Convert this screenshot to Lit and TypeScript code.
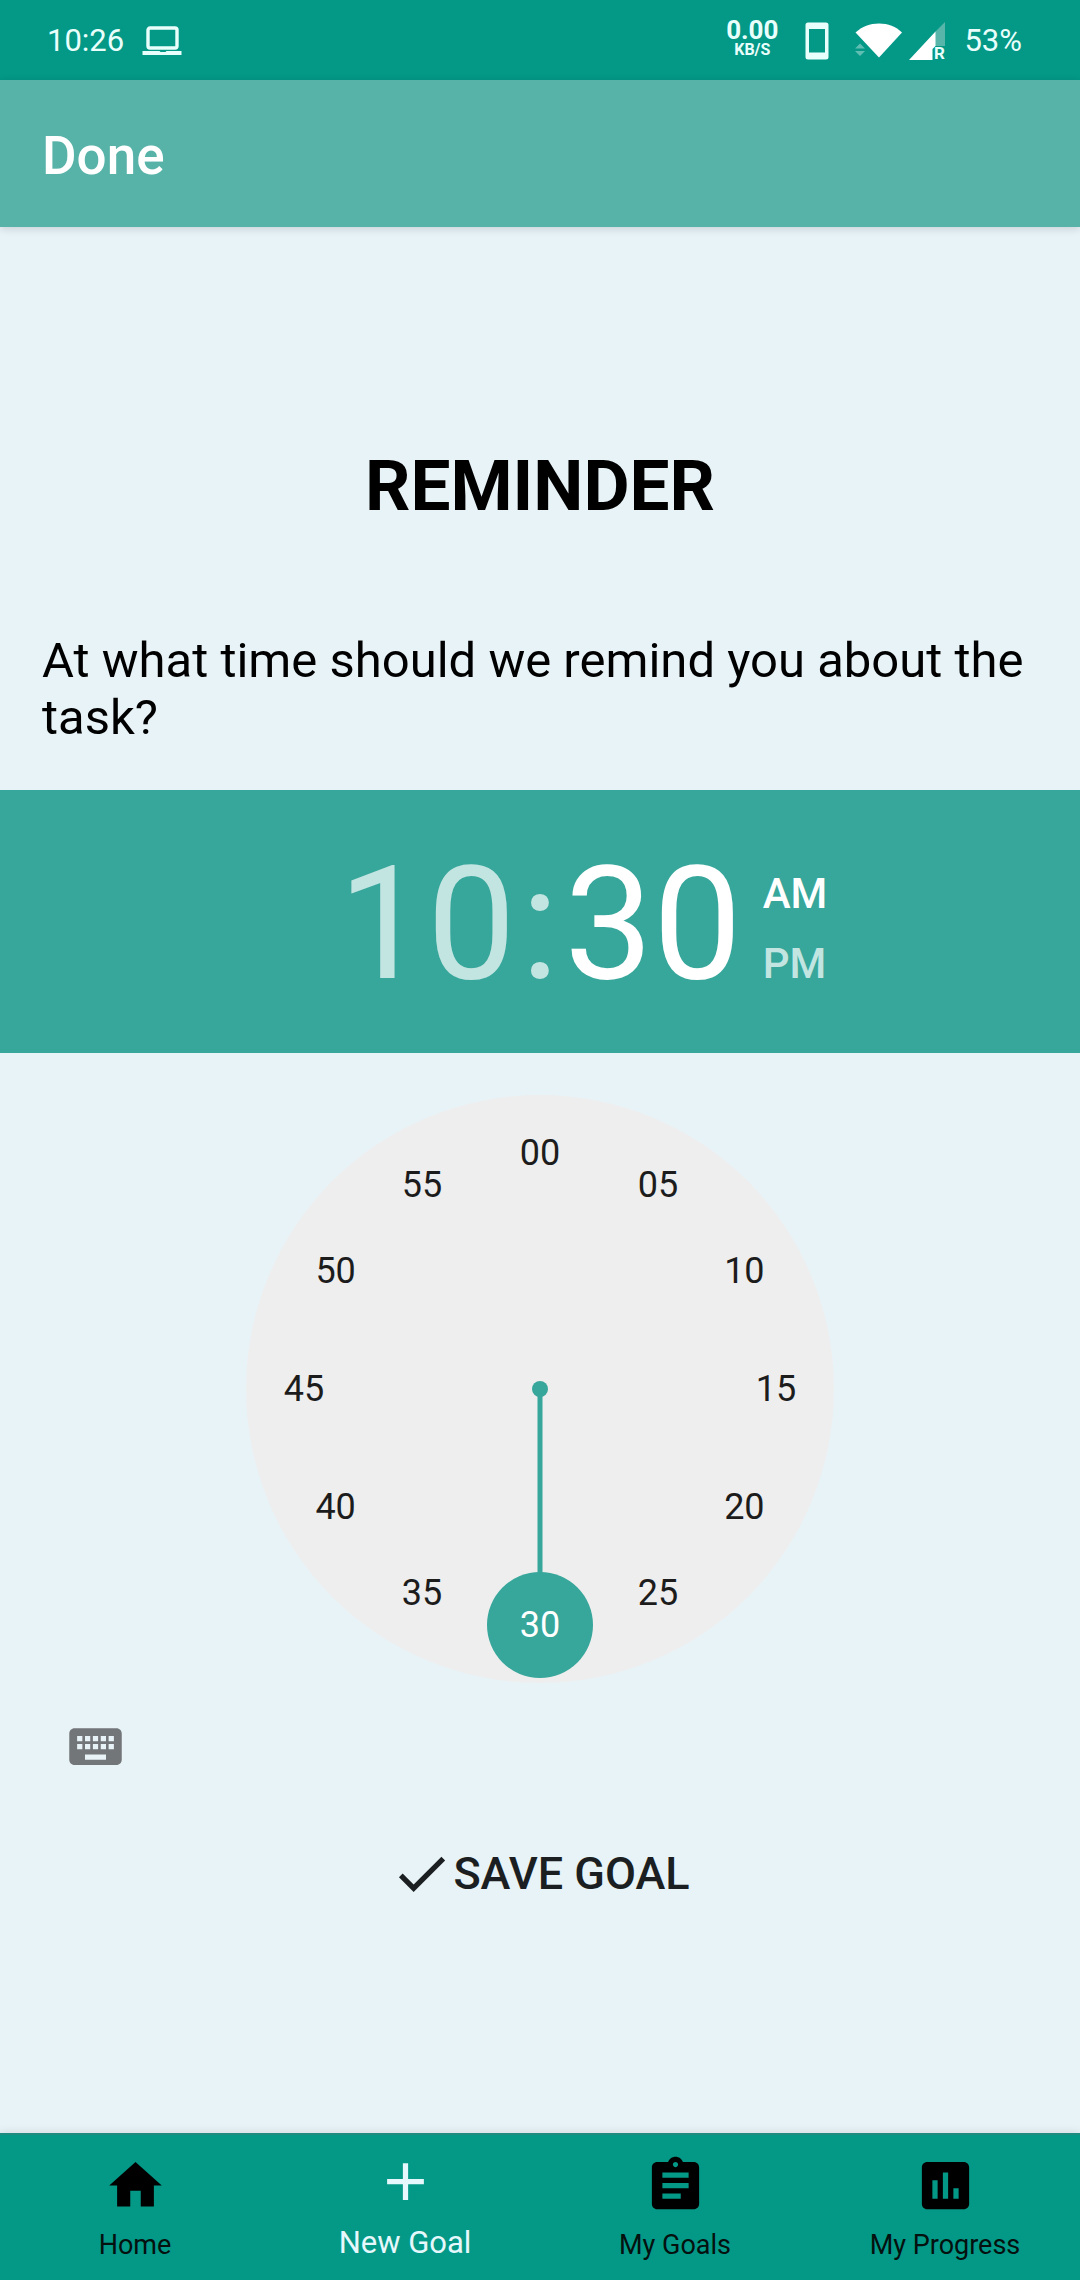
import { LitElement, html, css, svg } from "lit";
import { customElement, state } from "lit/decorators.js";
import { classMap } from "lit/directives/class-map.js";
import { styleMap } from "lit/directives/style-map.js";

const MINUTES = Array.from({ length: 12 }, (_, i) => i * 5);
const FACE = 588;
const RING = 236;

const pad = (n: number) => String(n).padStart(2, "0");

/** Point on the number ring for a minute, in face units. */
function ringPoint(minute: number) {
  const a = (minute / 60) * Math.PI * 2;
  return { x: FACE / 2 + RING * Math.sin(a), y: FACE / 2 - RING * Math.cos(a) };
}

@customElement("status-bar")
class StatusBar extends LitElement {
  static styles = css`
    :host {
      box-sizing: border-box;
      display: flex;
      align-items: center;
      justify-content: space-between;
      min-height: 80px;
      padding: 2px 58px 0 47px;
      background: #049887;
      color: #e9fffb;
      font-size: 31px;
      line-height: 36px;
    }
    .group {
      display: flex;
      align-items: center;
    }
    .left {
      gap: 18px;
    }
    svg {
      display: block;
      overflow: visible;
    }
    .speed {
      display: flex;
      flex-direction: column;
      align-items: center;
      padding-bottom: 4px;
      font-weight: 700;
    }
    .rate {
      font-size: 26px;
      line-height: 22px;
    }
    .unit {
      font-size: 16px;
      line-height: 18px;
    }
    .phone {
      margin-left: 27px;
    }
    .wifi {
      margin-left: 26px;
    }
    .signal {
      margin-left: 7px;
    }
    .battery {
      margin-left: 18px;
    }
    .r {
      font-size: 17px;
      font-weight: 700;
    }
  `;

  render() {
    return html`
      <div class="group left">
        <span>10:26</span>
        <svg width="40" height="30" viewBox="0 0 40 30" aria-hidden="true">
          <rect x="6" y="2" width="29" height="20" rx="2" fill="none" stroke="#e9fffb" stroke-width="3.4" />
          <path fill="#e9fffb" d="M.5 25h17l1 1h5l1-1h15v4H.5z" />
        </svg>
      </div>
      <div class="group">
        <div class="speed"><span class="rate">0.00</span><span class="unit">KB/S</span></div>
        <svg class="phone" width="24" height="38" viewBox="0 0 24 38" aria-hidden="true">
          <path
            fill="#e9fffb"
            fill-rule="evenodd"
            d="M3 .5h18a2.500 2.500 0 0 1 2.500 2.500v32a2.500 2.500 0 0 1-2.500 2.500H3A2.500 2.500 0 0 1 .5 35V3A2.500 2.500 0 0 1 3 .5zM4 7v23.500h16V7z"
          />
        </svg>
        <svg class="wifi" width="47" height="36" viewBox="0 0 47 36" aria-hidden="true">
          <path fill="#fff" d="M24 34.500L.5 9.500C7 3.500 15 .5 24 .5s17 3 23 9z" />
          <path fill="#5fbdb2" d="M0 25.500l5-5 5 5zM0 28h10l-5 5z" />
        </svg>
        <svg class="signal" width="37" height="40" viewBox="0 0 37 40" aria-hidden="true">
          <path fill="#57b5aa" d="M36 1v24H26V11z" />
          <path fill="#fff" d="M26.500 10.500V25l-3 3v11H0z" />
          <text class="r" x="25" y="38" fill="#e9fffb">R</text>
        </svg>
        <span class="battery">53%</span>
      </div>
    `;
  }
}

@customElement("time-header")
class TimeHeader extends LitElement {
  static properties = { minute: { type: Number }, pm: { type: Boolean } };
  declare minute: number;
  declare pm: boolean;

  static styles = css`
    :host {
      display: grid;
      grid-template-columns: 1fr auto 1fr;
      align-items: start;
      column-gap: 5px;
      padding: 42px 0 37px;
      background: #37a69b;
      color: #c3e5e1;
      font-size: 158px;
      line-height: 184px;
    }
    button {
      padding: 0;
      border: 0;
      background: none;
      color: #c3e5e1;
      font: inherit;
    }
    button.on {
      color: #fff;
    }
    .hour {
      justify-self: end;
    }
    .rest {
      display: flex;
      gap: 21px;
    }
    .period {
      display: flex;
      flex-direction: column;
      align-items: flex-start;
      gap: 21px;
      padding-top: 37px;
      font-size: 42px;
      font-weight: 500;
      line-height: 49px;
    }
  `;

  private pick(pm: boolean) {
    this.dispatchEvent(new CustomEvent("period", { detail: pm }));
  }

  render() {
    return html`
      <button class="hour">10</button>
      <span>:</span>
      <div class="rest">
        <button class="on">${pad(this.minute)}</button>
        <div class="period">
          <button class=${classMap({ on: !this.pm })} aria-pressed=${!this.pm} @click=${() => this.pick(false)}>AM</button>
          <button class=${classMap({ on: this.pm })} aria-pressed=${this.pm} @click=${() => this.pick(true)}>PM</button>
        </div>
      </div>
    `;
  }
}

@customElement("minute-dial")
class MinuteDial extends LitElement {
  static properties = { minute: { type: Number } };
  declare minute: number;

  static styles = css`
    :host {
      display: block;
      position: relative;
      width: 588px;
      max-width: 100%;
    }
    svg {
      display: block;
      width: 100%;
    }
    .mark {
      position: absolute;
      transform: translate(-50%, -50%);
      width: 80px;
      height: 80px;
      padding: 0;
      border: 0;
      border-radius: 50%;
      background: none;
      color: #1c1c1c;
      font: inherit;
      font-size: 36px;
      line-height: 42px;
    }
    .mark.on {
      color: #fff;
    }
  `;

  render() {
    const end = ringPoint(this.minute);
    const mid = FACE / 2;
    return html`
      <svg viewBox="0 0 ${FACE} ${FACE}" aria-hidden="true">
        ${svg`
          <circle cx=${mid} cy=${mid} r=${mid} fill="#eeeeee" />
          <line x1=${mid} y1=${mid} x2=${end.x} y2=${end.y} stroke="#37a69b" stroke-width="5" />
          <circle cx=${mid} cy=${mid} r="8" fill="#37a69b" />
          <circle cx=${end.x} cy=${end.y} r="53" fill="#37a69b" />
        `}
      </svg>
      ${MINUTES.map((m) => {
        const p = ringPoint(m);
        return html`<button
          class=${classMap({ mark: true, on: m === this.minute })}
          style=${styleMap({ left: `${(p.x / FACE) * 100}%`, top: `${(p.y / FACE) * 100}%` })}
          @click=${() => this.dispatchEvent(new CustomEvent("minute", { detail: m }))}
        >${pad(m)}</button>`;
      })}
    `;
  }
}

const TABS = [
  { label: "Home", path: "M10 20v-6h4v6h5v-8h3L12 3 2 12h3v8z" },
  { label: "New Goal", path: "M19 13h-6v6h-2v-6H5v-2h6V5h2v6h6v2z", active: true },
  {
    label: "My Goals",
    path: "M19 3h-4.180C14.400 1.840 13.300 1 12 1c-1.300 0-2.400.84-2.820 2H5c-1.100 0-2 .9-2 2v14c0 1.100.9 2 2 2h14c1.100 0 2-.9 2-2V5c0-1.100-.9-2-2-2zm-7 0c.55 0 1 .45 1 1s-.45 1-1 1-1-.45-1-1 .45-1 1-1zm2 14H7v-2h7v2zm3-4H7v-2h10v2zm0-4H7V7h10v2z",
  },
  {
    label: "My Progress",
    path: "M19 3H5c-1.100 0-2 .9-2 2v14c0 1.100.9 2 2 2h14c1.100 0 2-.9 2-2V5c0-1.100-.9-2-2-2zM9 17H7v-7h2v7zm4 0h-2V7h2v10zm4 0h-2v-4h2v4z",
  },
];

@customElement("tab-bar")
class TabBar extends LitElement {
  static styles = css`
    :host {
      display: block;
    }
    nav {
      display: grid;
      grid-template-columns: repeat(4, 1fr);
      background: #049887;
      border-top: 2px solid #1f8c7f;
      box-shadow: 0 -2px 8px rgba(0, 0, 0, 0.08);
    }
    a {
      display: flex;
      flex-direction: column;
      align-items: center;
      justify-content: flex-end;
      gap: 12px;
      padding: 15px 0 19px;
      color: #04110f;
      font-size: 27px;
      line-height: 32px;
      text-decoration: none;
    }
    a.active {
      color: #e6f8fb;
      font-size: 31px;
      line-height: 36px;
    }
    svg {
      display: block;
      width: 63px;
      height: 63px;
      fill: #000;
    }
    .active svg {
      fill: #e6f8fb;
    }
  `;

  render() {
    return html`<nav>
      ${TABS.map(
        (t) => html`<a href="#" class=${classMap({ active: !!t.active })}>
          <svg viewBox="0 0 24 24" aria-hidden="true"><path d=${t.path} /></svg>
          <span>${t.label}</span>
        </a>`,
      )}
    </nav>`;
  }
}

@customElement("app-root")
class AppRoot extends LitElement {
  @state() private minute = 30;
  @state() private pm = false;

  static styles = css`
    :host {
      display: flex;
      flex-direction: column;
      min-height: 100vh;
      background: #e8f3f8;
      color: #000;
      font-family: Roboto, "Liberation Sans", sans-serif;
    }
    .appbar {
      padding: 45px 42px 39px;
      background: #57b2a8;
      box-shadow: 0 2px 8px rgba(0, 0, 0, 0.14);
      color: #fff;
      font-size: 53px;
      font-weight: 500;
      line-height: 63px;
    }
    main {
      display: flex;
      flex: 1;
      flex-direction: column;
    }
    h1 {
      margin: 217px 0 104px;
      font-size: 71px;
      font-weight: 700;
      line-height: 84px;
      text-align: center;
    }
    p {
      margin: 0 42px 44px;
      font-size: 49px;
      line-height: 57px;
    }
    minute-dial {
      align-self: center;
      margin-top: 42px;
    }
    button {
      padding: 0;
      border: 0;
      background: none;
      font: inherit;
    }
    svg {
      display: block;
      width: 63px;
      height: 63px;
    }
    .keyboard {
      align-self: flex-start;
      margin: 32px 64px 64px;
      fill: #737678;
    }
    .save {
      display: flex;
      align-self: center;
      align-items: center;
      color: #1b1f21;
      fill: #1b1f21;
      font-size: 45px;
      font-weight: 500;
      line-height: 53px;
    }
  `;

  render() {
    return html`
      <status-bar></status-bar>
      <header class="appbar">Done</header>
      <main>
        <h1>REMINDER</h1>
        <p>At what time should we remind you about the task?</p>
        <time-header
          .minute=${this.minute}
          .pm=${this.pm}
          @period=${(e: CustomEvent) => (this.pm = e.detail)}
        ></time-header>
        <minute-dial .minute=${this.minute} @minute=${(e: CustomEvent) => (this.minute = e.detail)}></minute-dial>
        <button class="keyboard" aria-label="Keyboard input">
          <svg viewBox="0 0 24 24" aria-hidden="true">
            <path
              d="M20 5H4c-1.100 0-1.990.9-1.990 2L2 17c0 1.100.9 2 2 2h16c1.100 0 2-.9 2-2V7c0-1.100-.9-2-2-2zm-9 3h2v2h-2V8zm0 3h2v2h-2v-2zM8 8h2v2H8V8zm0 3h2v2H8v-2zm-1 2H5v-2h2v2zm0-3H5V8h2v2zm9 7H8v-2h8v2zm0-4h-2v-2h2v2zm0-3h-2V8h2v2zm3 3h-2v-2h2v2zm0-3h-2V8h2v2z"
            />
          </svg>
        </button>
        <button class="save">
          <svg viewBox="0 0 24 24" aria-hidden="true">
            <path d="M9 16.170L4.830 12l-1.420 1.410L9 19 21 7l-1.410-1.410z" />
          </svg>
          SAVE GOAL
        </button>
      </main>
      <tab-bar></tab-bar>
    `;
  }
}
